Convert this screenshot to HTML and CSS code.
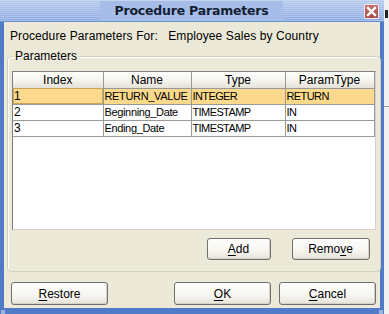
FILE: index.html
```html
<!DOCTYPE html>
<html lang="en">
<head>
<meta charset="UTF-8" />
<title>Procedure Parameters</title>
<link rel="stylesheet" href="styles.css">
</head>
<body>
<div class="screen">
    <div class="window">
        <div class="titlebar">
            <span class="title">Procedure Parameters</span>
            <button class="close-btn" aria-label="Close">
                <svg width="11" height="11" viewBox="0 0 11 11">
                    <path d="M2 2 L9 9 M9 2 L2 9" stroke="#fff" stroke-width="2.4" stroke-linecap="square" />
                </svg>
            </button>
        </div>
        <div class="content">
            <div class="proc-label">Procedure Parameters For:&nbsp;&nbsp; Employee Sales by Country</div>

            <fieldset class="group">
                <legend>Parameters</legend>
                <div class="table-wrap">
                    <table class="grid">
                        <colgroup>
                            <col class="c-index">
                            <col class="c-name">
                            <col class="c-type">
                            <col class="c-ptype">
                        </colgroup>
                        <thead>
                            <tr><th>Index</th><th>Name</th><th>Type</th><th>ParamType</th></tr>
                        </thead>
                        <tbody>
                            <tr class="selected"><td class="focus">1</td><td class="name">RETURN_VALUE</td><td class="narrow">INTEGER</td><td class="narrow">RETURN</td></tr>
                            <tr><td>2</td><td class="name">Beginning_Date</td><td class="narrow">TIMESTAMP</td><td class="narrow">IN</td></tr>
                            <tr><td>3</td><td class="name">Ending_Date</td><td class="narrow">TIMESTAMP</td><td class="narrow">IN</td></tr>
                        </tbody>
                    </table>
                </div>
                <div class="group-actions">
                    <button class="btn btn-add"><u>A</u>dd</button>
                    <button class="btn btn-remove">Remo<u>v</u>e</button>
                </div>
            </fieldset>

            <div class="dialog-actions">
                <button class="btn btn-restore"><u>R</u>estore</button>
                <div class="spacer"></div>
                <button class="btn btn-ok"><u>O</u>K</button>
                <button class="btn btn-cancel"><u>C</u>ancel</button>
            </div>
        </div>
        <div class="grip grip-left"></div>
        <div class="grip grip-right"></div>
    </div>
    <div class="side-strip">
        <span class="mark-top"></span>
        <span class="mark-line"></span>
    </div>
</div>
</body>
</html>
```

FILE: styles.css
```css
/* Base */
* {margin: 0; padding: 0; box-sizing: border-box;}
body {
    font-family: 'Liberation Sans', Arial, sans-serif;
    font-size: 12px;
    color: #000;
    background: #f1f1f1;
    width: 389px;
    height: 314px;
    overflow: hidden;
}
.screen {
    display: flex;
    height: 314px;
}

/* Window frame */
.window {
    position: relative;
    width: 384px;
    height: 314px;
    background: #ece9d8;
    border-left: 4px solid #4f7bc8;
    border-right: 4px solid #4f7bc8;
    border-bottom: 6px solid #4f7bc8;
    display: flex;
    flex-direction: column;
}
.titlebar {
    height: 22px;
    margin: 0 -4px;
    padding: 0 5px 0 4px;
    display: flex;
    align-items: center;
    justify-content: center;
    position: relative;
    background:
        repeating-linear-gradient(180deg, rgba(255,255,255,0.22) 0 1px, rgba(255,255,255,0) 1px 2px),
        linear-gradient(180deg, #b7cbee 0%, #a2bbe8 50%, #8eace2 100%);
    border-bottom: 1px solid #6d90cf;
}
.title {
    font-family: 'DejaVu Sans', 'Liberation Sans', sans-serif;
    font-weight: 700;
    font-size: 12.5px;
    color: #141e33;
    letter-spacing: -0.2px;
    padding: 0 14px;
    background: #a5bde8;
    line-height: 20px;
}
.close-btn {
    position: absolute;
    right: 5px;
    top: 4px;
    width: 15px;
    height: 15px;
    border: 1px solid #f5e9e9;
    border-radius: 2px;
    background: linear-gradient(180deg, #c77070 0%, #a54848 100%);
    display: flex;
    align-items: center;
    justify-content: center;
}

/* Content */
.content {
    flex: 1;
    display: flex;
    flex-direction: column;
    padding: 0 2px 0 3px;
}
.proc-label {
    height: 28px;
    line-height: 28px;
    padding-left: 3px;
    font-size: 12px;
    letter-spacing: 0.1px;
}
.group {
    height: 222px;
    border: 1px solid #d0d0bf;
    border-radius: 4px;
    padding: 0 4px 0 4px;
    display: flex;
    flex-direction: column;
    box-shadow: inset 1px 1px 0 #fff;
}
.group legend {
    font-size: 12px;
    padding: 0 2px 0 1px;
    margin-left: 2px;
    line-height: 12px;
}
.table-wrap {
    margin-top: 9px;
    height: 159px;
    background: #fff;
    border: 1px solid #808080;
    border-color: #808080 #d4d0c8 #d4d0c8 #808080;
    overflow: hidden;
}
.grid {
    border-collapse: collapse;
    table-layout: fixed;
    width: 361px;
    font-size: 11px;
}
.c-index {width: 90px;}
.c-name {width: 88px;}
.c-type {width: 94px;}
.c-ptype {width: 89px;}
.grid th {
    height: 16px;
    font-weight: 400;
    font-size: 12px;
    background: linear-gradient(180deg, #ffffff 0%, #f4f3ee 55%, #e3e1d6 100%);
    border: 1px solid #999;
    border-top: none;
    line-height: 14px;
    padding: 0;
}
.grid td {
    height: 16px;
    border: 1px solid #999;
    padding: 0 0 0 1px;
    line-height: 14px;
    white-space: nowrap;
    overflow: hidden;
    font-size: 11px;
}
.grid td:first-child {border-left: none; font-size: 12px;}
.grid th:first-child {border-left: none;}
.grid td.name {letter-spacing: -0.35px;}
.grid td.narrow {
    font-size: 11px;
    letter-spacing: -0.6px;
}
.selected td {background: #fbd98c;}
.selected td.focus {
    outline: 1px solid #c8a453;
    outline-offset: -1px;
}

.group-actions {
    display: flex;
    justify-content: flex-end;
    gap: 21px;
    margin-top: 8px;
    padding-right: 6px;
}

/* Buttons */
.btn {
    font-family: 'Liberation Sans', Arial, sans-serif;
    font-size: 12px;
    height: 22px;
    border: 1px solid #6f6f6f;
    border-radius: 3px;
    background: linear-gradient(180deg, #ffffff 0%, #f6f5f0 60%, #e5e3d8 100%);
    box-shadow: inset -1px -1px 0 #d6d3c5;
    color: #000;
}
.btn u {text-decoration-thickness: 1px; text-underline-offset: 2px;}
.btn-add {width: 64px;}
.btn-remove {width: 78px;}
.dialog-actions {
    display: flex;
    align-items: center;
    margin-top: 10px;
    padding: 0 2px 0 4px;
    gap: 8px;
}
.dialog-actions .btn {height: 23px;}
.btn-restore {width: 97px;}
.spacer {flex: 1;}
.btn-ok {width: 97px;}
.btn-cancel {width: 97px;}

.grip {
    position: absolute;
    bottom: -6px;
    width: 4px;
    height: 4px;
    background: radial-gradient(circle, #9bb3e0 0 1px, transparent 1px) 0 0 / 2px 2px;
}
.grip-left {left: -3px;}
.grip-right {right: -3px;}

/* Right strip (desktop behind) */
.side-strip {
    flex: 1;
    position: relative;
    background: #f1f1f1;
}
.mark-top {
    position: absolute;
    left: 1px;
    top: 10px;
    width: 3px;
    height: 8px;
    background: #222;
}
.mark-line {
    position: absolute;
    left: 0;
    top: 106px;
    width: 5px;
    height: 1px;
    background: #999;
}
```
